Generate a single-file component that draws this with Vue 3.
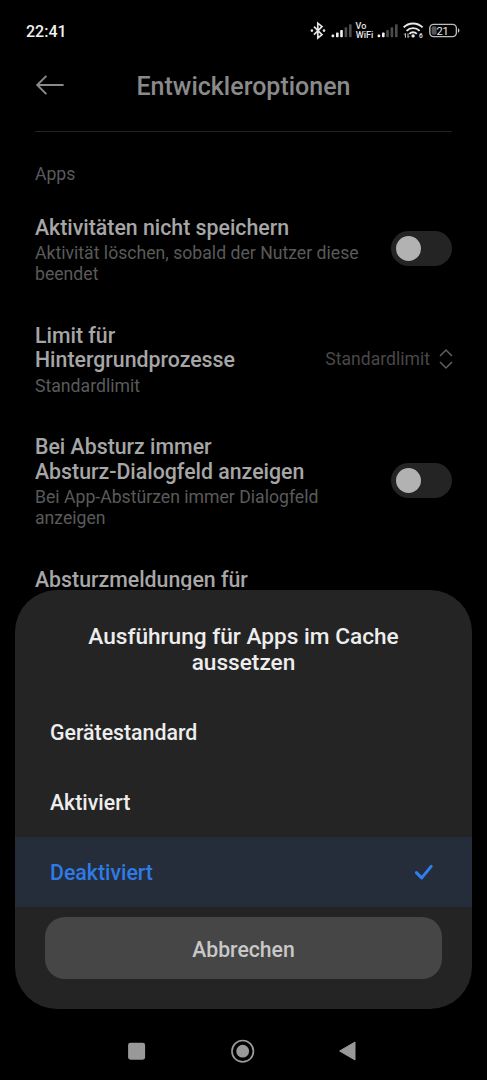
<script setup>
const rows = [
  { title: ['Aktivitäten nicht speichern'], sub: ['Aktivität löschen, sobald der Nutzer diese', 'beendet'], kind: 'switch' },
  { title: ['Limit für', 'Hintergrundprozesse'], sub: ['Standardlimit'], kind: 'select', value: 'Standardlimit' },
  { title: ['Bei Absturz immer', 'Absturz-Dialogfeld anzeigen'], sub: ['Bei App-Abstürzen immer Dialogfeld', 'anzeigen'], kind: 'switch' },
  { title: ['Absturzmeldungen für'], sub: [], kind: 'none' },
]
const options = [
  { label: 'Gerätestandard', selected: false },
  { label: 'Aktiviert', selected: false },
  { label: 'Deaktiviert', selected: true },
]
</script>

<template>
  <div class="screen">
    <div class="status">
      <span class="clock">22:41</span>
      <svg class="status-icons" width="160" height="24" viewBox="0 0 160 24">
        <g fill="none" stroke="#e4e4e4" stroke-width="1.7">
          <path d="M4 7.6l8 8-4.2 3.4V4.2l4.2 3.4-8 8" />
        </g>
        <circle cx="1.9" cy="11.6" r="1.3" fill="#e4e4e4" />
        <circle cx="14" cy="11.6" r="1.3" fill="#e4e4e4" />
        <g fill="#f0f0f0">
          <rect x="21.6" y="15.6" width="2.6" height="2.6" rx=".8" />
          <rect x="26" y="13.4" width="2.6" height="4.8" rx=".8" />
          <rect x="30.2" y="11" width="2.6" height="7.2" rx=".8" />
          <rect x="67.6" y="15.6" width="2.6" height="2.6" rx=".8" />
          <rect x="72" y="13.4" width="2.6" height="4.8" rx=".8" />
        </g>
        <g fill="#4c4c4c">
          <rect x="34.6" y="8.2" width="2.6" height="10" rx=".8" />
          <rect x="39" y="5.2" width="2.6" height="13" rx=".8" />
          <rect x="76.2" y="11" width="2.6" height="7.2" rx=".8" />
          <rect x="80.6" y="8.2" width="2.6" height="10" rx=".8" />
          <rect x="85" y="5.2" width="2.6" height="13" rx=".8" />
        </g>
        <text class="vo"><tspan x="45.6" y="9.8">Vo</tspan><tspan x="45.8" y="18.8">WiFi</tspan></text>
        <g fill="none" stroke="#e8e8e8" stroke-width="1.9">
          <path d="M93.6 8.4a13.4 13.4 0 0 1 19 0" />
          <path d="M96.6 11.8a9.2 9.2 0 0 1 13 0" />
          <path d="M99.4 14.8a5.2 5.2 0 0 1 7.4 0" />
        </g>
        <circle cx="103.1" cy="16.9" r="1.7" fill="#e8e8e8" />
        <path d="M95.4 18.6v-4M94.2 15.6l1.2-1.3M98 14.4v4M99.2 17.3l-1.2 1.3" stroke="#d8d8d8" stroke-width="1" fill="none" />
        <text x="109" y="18.6" class="six">6</text>
        <rect x="119.8" y="5.4" width="26.6" height="12.2" rx="3.8" fill="none" stroke="#bdbdbd" stroke-width="1.4" />
        <rect x="121.6" y="7.3" width="5" height="8.4" rx="1.8" fill="#555" />
        <path d="M148 9.3q1.4.4 1.4 2.2t-1.4 2.2z" fill="#c8c8c8" />
        <text x="132.6" y="15.6" class="pct">21</text>
      </svg>
    </div>

    <header class="header">
      <svg class="back" width="30" height="22" viewBox="0 0 30 22">
        <path d="M28.6 11H2.4M11.4 1.8L2.2 11l9.2 9.2" fill="none" stroke="#8a8a8a" stroke-width="1.9" />
      </svg>
      <h1>Entwickleroptionen</h1>
    </header>

    <main class="settings">
      <div class="section">Apps</div>
      <div v-for="row in rows" :key="row.title[0]" class="row">
        <div class="texts">
          <div v-for="t in row.title" :key="t" class="title">{{ t }}</div>
          <div class="subs">
            <div v-for="s in row.sub" :key="s" class="sub">{{ s }}</div>
          </div>
        </div>
        <div v-if="row.kind === 'switch'" class="switch"><span class="knob"></span></div>
        <div v-if="row.kind === 'select'" class="select">
          <span>{{ row.value }}</span>
          <svg width="14" height="22" viewBox="0 0 14 22">
            <path d="M1 8l6-6 6 6M1 14l6 6 6-6" fill="none" stroke="#606060" stroke-width="1.5" />
          </svg>
        </div>
      </div>
    </main>

    <section class="sheet">
      <h2>Ausführung für Apps im Cache<br />aussetzen</h2>
      <div v-for="o in options" :key="o.label" class="option" :class="{ selected: o.selected }">
        <span>{{ o.label }}</span>
        <svg v-if="o.selected" width="20" height="18" viewBox="0 0 20 18">
          <path d="M2.4 9.6l5.3 5.3L17.2 3.4" fill="none" stroke="#2f80ed" stroke-width="3" stroke-linecap="round" stroke-linejoin="round" />
        </svg>
      </div>
      <button class="cancel">Abbrechen</button>
    </section>

    <nav class="nav">
      <svg width="24" height="24" viewBox="0 0 24 24"><rect x="3.1" y="3.7" width="17" height="17" rx="2.4" fill="#999" /></svg>
      <svg width="24" height="24" viewBox="0 0 24 24">
        <circle cx="11.7" cy="12.2" r="10.7" fill="none" stroke="#999" stroke-width="1.7" />
        <circle cx="11.7" cy="12.2" r="6.4" fill="#999" />
      </svg>
      <svg width="24" height="24" viewBox="0 0 24 24"><path d="M3.6 12L19 3v18z" fill="#999" stroke="#999" stroke-width="1" stroke-linejoin="round" /></svg>
    </nav>
  </div>
</template>

<style>
body { background: #000; }
</style>

<style scoped>
.screen {
  position: relative;
  width: 487px;
  height: 1080px;
  overflow: hidden;
  background: #000;
  font-family: Roboto, sans-serif;
}
.status {
  display: flex;
  justify-content: space-between;
  align-items: center;
  height: 29px;
  padding: 16px 17px 0 25px;
}
.clock { font-size: 16px; font-weight: 500; line-height: 30px; color: #f2f2f2; padding: 2px 0 0 1px; }
.status-icons { display: block; margin-top: 1px; }
.vo { font-size: 9px; font-weight: 500; fill: #e8e8e8; }
.six { font-size: 6.5px; font-weight: 700; fill: #d8d8d8; }
.pct { font-size: 11px; fill: #e8e8e8; text-anchor: middle; }
.header {
  display: grid;
  grid-template-columns: 30px 1fr 30px;
  align-items: center;
  height: 81px;
  padding-bottom: 5px;
  margin: 0 35px;
  border-bottom: 1px solid #222;
}
.back { display: block; margin-top: -2px; }
h1 { margin: 0; padding-top: 2px; font-size: 25px; line-height: 30px; font-weight: 500; color: #8a8a8a; text-align: center; }
.settings { padding: 0 35px; }
.section { padding: 32px 0 10px; font-size: 17.6px; line-height: 21px; color: #5a5a5a; }
.row { display: flex; justify-content: space-between; align-items: center; padding: 18px 0; }
.texts { padding-top: 3px; }
.title { font-size: 21.3px; line-height: 24.7px; font-weight: 500; color: #a6a6a6; white-space: nowrap; }
.subs { padding-top: 2.7px; }
.sub { font-size: 17.65px; line-height: 20.6px; color: #5a5a5a; white-space: nowrap; }
.switch { width: 61px; height: 35px; border-radius: 18px; background: #242424; display: flex; align-items: center; }
.knob { width: 25px; height: 25px; margin-left: 5px; border-radius: 50%; background: #b2b2b2; }
.select { display: flex; align-items: center; gap: 8px; padding-top: 1px; margin-right: -1px; font-size: 17.6px; color: #484848; }
.select span { margin-right: 1px; }
.sheet {
  position: absolute;
  left: 15px;
  top: 590px;
  width: 457px;
  height: 419px;
  border-radius: 42px;
  background: #242424;
}
h2 {
  margin: 0;
  height: 73px;
  padding-top: 34px;
  text-align: center;
  font-size: 22.65px;
  line-height: 26.4px;
  font-weight: 500;
  color: #ededed;
}
.option {
  display: flex;
  justify-content: space-between;
  align-items: center;
  height: 70px;
  padding: 0 38px 0 35px;
  font-size: 21.3px;
  font-weight: 500;
  color: #ededed;
}
.option.selected { background: #252c3a; color: #2f7be6; }
.cancel {
  display: block;
  width: 397px;
  height: 62px;
  margin: 10px 30px 0;
  padding: 2px 0 0;
  border: 0;
  border-radius: 20px;
  background: #464646;
  color: #c8c8c8;
  font: 500 21.2px Roboto, sans-serif;
}
.nav {
  position: absolute;
  left: 125px;
  top: 1039px;
  width: 235px;
  display: flex;
  justify-content: space-between;
}
</style>
